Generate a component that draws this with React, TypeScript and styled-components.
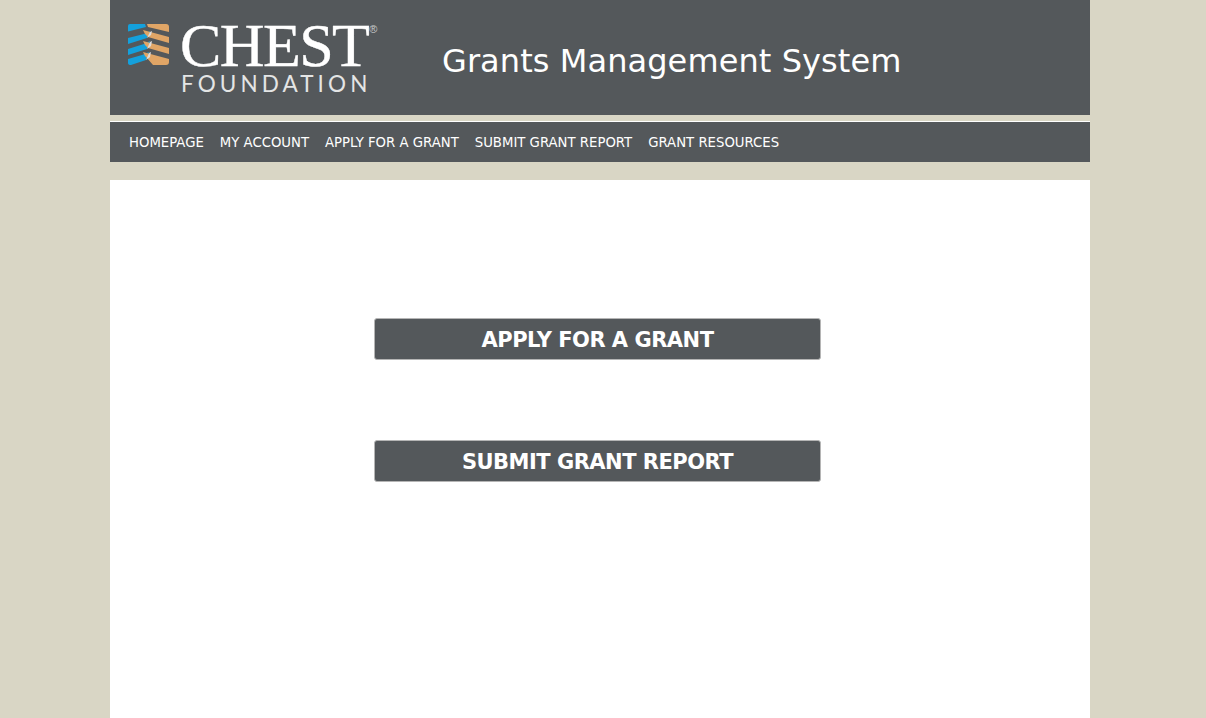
import styled, { createGlobalStyle } from "styled-components";

const GlobalStyle = createGlobalStyle`
  html, body {
    margin: 0;
    padding: 0;
    height: 100%;
    background-color: #d9d6c5;
    overflow: hidden;
  }
`;

const Page = styled.div`
  width: 980px;
  margin-left: 110px;
  font-family: "DejaVu Sans", Verdana, sans-serif;
`;

const Header = styled.header`
  display: flex;
  align-items: flex-start;
  height: 115px;
  background-color: #54585b;
`;

const Logo = styled.div`
  display: flex;
  gap: 10px;
  width: 332px;
  padding: 24px 0 0 18px;
  box-sizing: border-box;
  flex-shrink: 0;
`;

const LogoMark = styled.svg`
  width: 41px;
  height: 41px;
  flex-shrink: 0;
`;

const LogoWords = styled.div`
  display: flex;
  flex-direction: column;
  align-items: flex-start;
  color: #fff;
`;

const LogoTitle = styled.div`
  position: relative;
  font-family: "Liberation Serif", "Times New Roman", serif;
  font-size: 62px;
  line-height: 42px;
  letter-spacing: -1.6px;
  margin: 0 0 0 1px;
  white-space: nowrap;
  -webkit-text-stroke: 0.4px #fff;
`;

const Registered = styled.span`
  position: absolute;
  top: 0;
  right: -9px;
  font-family: "Liberation Sans", Arial, sans-serif;
  font-size: 11px;
  line-height: 10px;
  letter-spacing: 0;
  -webkit-text-stroke: 0;
  color: #c9cbcc;
`;

const LogoSubtitle = styled.div`
  font-family: "Lato", "Liberation Sans", sans-serif;
  font-size: 22.5px;
  line-height: 22px;
  letter-spacing: 4.1px;
  margin: 7px 0 0 2px;
  color: #e4e5e5;
  white-space: nowrap;
`;

const SystemTitle = styled.h1`
  margin: 41px 0 0;
  font-size: 32px;
  line-height: 40px;
  font-weight: 400;
  letter-spacing: 0.08px;
  color: #fff;
  white-space: nowrap;
`;

const NavBar = styled.nav`
  display: flex;
  align-items: center;
  gap: 16px;
  height: 40px;
  margin-top: 6px;
  padding-left: 19px;
  border-top: 1px solid #fff;
  background-color: #54585b;
`;

const NavLink = styled.a`
  font-size: 13.25px;
  color: #fff;
  text-decoration: none;
  white-space: nowrap;
`;

const Main = styled.main`
  display: flex;
  flex-direction: column;
  align-items: center;
  gap: 80px;
  height: 538px;
  margin-top: 18px;
  padding: 138px 5px 0 0;
  box-sizing: border-box;
  background-color: #fff;
`;

const BigButton = styled.button`
  width: 447px;
  height: 42px;
  padding: 1px 0 0;
  border: 1px solid #b5b5b5;
  border-radius: 3px;
  background-color: #54585b;
  color: #fff;
  font-family: inherit;
  font-size: 21px;
  font-weight: 700;
  letter-spacing: -0.5px;
  cursor: pointer;
`;

const navItems = [
  "HOMEPAGE",
  "MY ACCOUNT",
  "APPLY FOR A GRANT",
  "SUBMIT GRANT REPORT",
  "GRANT RESOURCES",
];

const App = () => (
  <>
    <GlobalStyle />
    <Page>
      <Header>
        <Logo>
          <LogoMark viewBox="0 0 41 41" aria-hidden="true">
            <path d="M2 0H17L18 3 0 7.5V2Q0 0 2 0Z" fill="#14a0dc" />
            <path d="M0 14 16 10 22 7 19 14 0 20Z" fill="#14a0dc" />
            <path d="M0 25 16 20 22 17 19 25 0 31Z" fill="#14a0dc" />
            <path d="M0 35 14 31 21 28 18 36 3 41Q0 41 0 39Z" fill="#14a0dc" />
            <path d="M19 0H38Q41 0 41 3V8L20 3Z" fill="#e0a566" />
            <path d="M15 6 41 13V19L20 13 17 10Z" fill="#e0a566" />
            <path d="M15 17 41 24V30L20 24 17 21Z" fill="#e0a566" />
            <path d="M15 28 41 35V38Q41 41 38 41H25L19 34 17 32Z" fill="#e0a566" />
            <path d="M22 8 24 7 23 11 19 14Z M22 18 24 17 23 22 19 25Z M21 29 23 28 22 33 18 36Z" fill="#dcdcdc" />
          </LogoMark>
          <LogoWords>
            <LogoTitle>
              CHEST
              <Registered>®</Registered>
            </LogoTitle>
            <LogoSubtitle>FOUNDATION</LogoSubtitle>
          </LogoWords>
        </Logo>
        <SystemTitle>Grants Management System</SystemTitle>
      </Header>
      <NavBar>
        {navItems.map((item) => (
          <NavLink href="#" key={item}>
            {item}
          </NavLink>
        ))}
      </NavBar>
      <Main>
        <BigButton>APPLY FOR A GRANT</BigButton>
        <BigButton>SUBMIT GRANT REPORT</BigButton>
      </Main>
    </Page>
  </>
);

export default App;
